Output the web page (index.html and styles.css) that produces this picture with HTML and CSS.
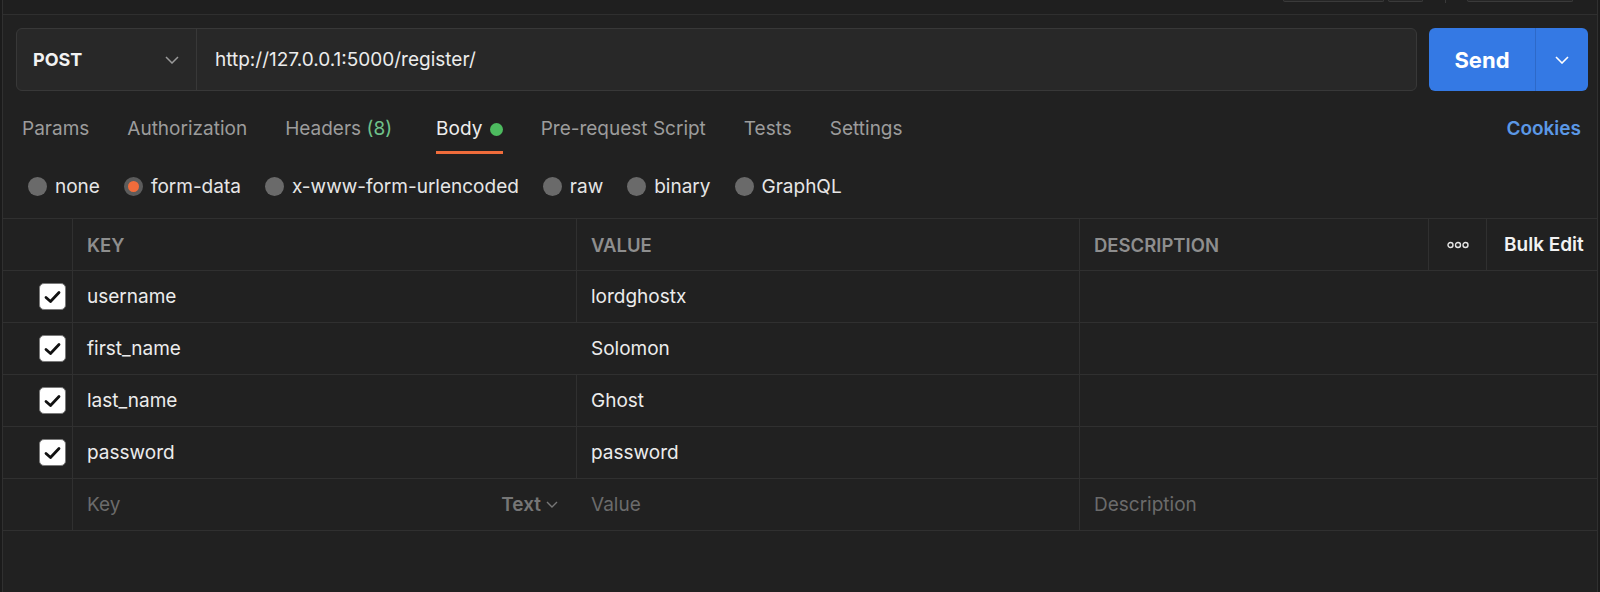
FILE: index.html
```html
<!DOCTYPE html>
<html>
<head>
<meta charset="utf-8">
<link rel="stylesheet" href="styles.css">
</head>
<body>
<div class="window">
  <div class="topbar">
    <span class="stub stub-a"></span>
    <span class="stub stub-b"></span>
    <span class="stub-div"></span>
    <span class="stub stub-c"></span>
  </div>

  <div class="urlrow">
    <div class="urlbox">
      <div class="method">
        <span class="method-name">POST</span>
        <svg class="chev" width="14" height="8" viewBox="0 0 14 8"><path d="M1 1 L7 7 L13 1" fill="none" stroke="#9a9a9a" stroke-width="1.5"/></svg>
      </div>
      <div class="url">http://127.0.0.1:5000/register/</div>
    </div>
    <div class="send">
      <span class="send-label">Send</span>
      <span class="send-chev"><svg width="14" height="8" viewBox="0 0 14 8"><path d="M1 1 L7 7 L13 1" fill="none" stroke="#ffffff" stroke-width="1.6"/></svg></span>
    </div>
  </div>

  <div class="tabs">
    <span class="tab">Params</span>
    <span class="tab">Authorization</span>
    <span class="tab">Headers <span class="count">(8)</span></span>
    <span class="tab active">Body <span class="dot"></span></span>
    <span class="tab">Pre-request Script</span>
    <span class="tab">Tests</span>
    <span class="tab">Settings</span>
    <span class="cookies">Cookies</span>
  </div>

  <div class="radios">
    <span class="radio"><span class="circle"></span>none</span>
    <span class="radio"><span class="circle on"></span>form-data</span>
    <span class="radio"><span class="circle"></span>x-www-form-urlencoded</span>
    <span class="radio"><span class="circle"></span>raw</span>
    <span class="radio"><span class="circle"></span>binary</span>
    <span class="radio"><span class="circle"></span>GraphQL</span>
  </div>

  <div class="table">
    <div class="cell hd"></div>
    <div class="cell hd">KEY</div>
    <div class="cell hd">VALUE</div>
    <div class="cell hd">DESCRIPTION</div>
    <div class="cell hd more"><svg width="22" height="8" viewBox="0 0 22 8"><circle cx="3.5" cy="4" r="2.5" fill="none" stroke="#e6e6e6" stroke-width="1.4"/><circle cx="11" cy="4" r="2.5" fill="none" stroke="#e6e6e6" stroke-width="1.4"/><circle cx="18.5" cy="4" r="2.5" fill="none" stroke="#e6e6e6" stroke-width="1.4"/></svg></div>
    <div class="cell hd bulk">Bulk Edit</div>

    <div class="cell chk"><span class="box"><svg width="17" height="14" viewBox="0 0 17 14"><path d="M2 7.5 L6.5 11.5 L15 2.5" fill="none" stroke="#111" stroke-width="2.8" stroke-linecap="round" stroke-linejoin="round"/></svg></span></div>
    <div class="cell">username</div>
    <div class="cell">lordghostx</div>
    <div class="cell desc"></div>

    <div class="cell chk"><span class="box"><svg width="17" height="14" viewBox="0 0 17 14"><path d="M2 7.5 L6.5 11.5 L15 2.5" fill="none" stroke="#111" stroke-width="2.8" stroke-linecap="round" stroke-linejoin="round"/></svg></span></div>
    <div class="cell">first_name</div>
    <div class="cell">Solomon</div>
    <div class="cell desc"></div>

    <div class="cell chk"><span class="box"><svg width="17" height="14" viewBox="0 0 17 14"><path d="M2 7.5 L6.5 11.5 L15 2.5" fill="none" stroke="#111" stroke-width="2.8" stroke-linecap="round" stroke-linejoin="round"/></svg></span></div>
    <div class="cell">last_name</div>
    <div class="cell">Ghost</div>
    <div class="cell desc"></div>

    <div class="cell chk"><span class="box"><svg width="17" height="14" viewBox="0 0 17 14"><path d="M2 7.5 L6.5 11.5 L15 2.5" fill="none" stroke="#111" stroke-width="2.8" stroke-linecap="round" stroke-linejoin="round"/></svg></span></div>
    <div class="cell">password</div>
    <div class="cell">password</div>
    <div class="cell desc"></div>

    <div class="cell"></div>
    <div class="cell ph keycell"><span>Key</span><span class="type">Text <svg width="12" height="7" viewBox="0 0 12 7"><path d="M1 1 L6 6 L11 1" fill="none" stroke="#777" stroke-width="1.4"/></svg></span></div>
    <div class="cell ph">Value</div>
    <div class="cell ph desc">Description</div>
  </div>
</div>
</body>
</html>
```
FILE: styles.css
```css
html, body {
  margin: 0;
  padding: 0;
  background: #1b1b1b;
  height: 100%;
}
body {
  font-family: Inter, "Noto Sans", sans-serif;
  color: #e6e6e6;
  overflow: hidden;
}
.window {
  margin: 0 2px;
  height: 592px;
  background: #212121;
  border-left: 1px solid #303030;
  border-right: 1px solid #303030;
}
.topbar {
  height: 14px;
  background: #1f1f1f;
  border-bottom: 1px solid #2f2f2f;
  display: flex;
  justify-content: flex-end;
  align-items: flex-start;
  padding-right: 24px;
}
.stub {
  height: 1px;
  border: 1px solid #3a3a3a;
  border-top: none;
  border-radius: 0 0 4px 4px;
  background: #262626;
}
.stub-a { width: 99px; }
.stub-b { width: 33px; margin-left: 4px; }
.stub-div { width: 1px; height: 3px; background: #3a3a3a; margin: 0 21px 0 22px; }
.stub-c { width: 104px; }

.urlrow {
  display: flex;
  margin: 13px 9px 0 13px;
  height: 63px;
  gap: 12px;
}
.urlbox {
  flex: 1;
  display: flex;
  background: #282828;
  border: 1px solid #383838;
  border-radius: 6px;
}
.method {
  box-sizing: border-box;
  width: 180px;
  display: flex;
  align-items: center;
  justify-content: space-between;
  padding: 0 17px 0 16px;
  border-right: 1px solid #383838;
}
.method-name {
  font-weight: 700;
  font-size: 18px;
  color: #f2f2f2;
}
.url {
  display: flex;
  align-items: center;
  padding-left: 18px;
  font-size: 19px;
  color: #ececec;
}
.send {
  width: 159px;
  display: flex;
  background: #3479e4;
  border-radius: 6px;
  color: #fff;
}
.send-label {
  width: 106px;
  display: flex;
  align-items: center;
  justify-content: center;
  font-weight: 700;
  font-size: 22px;
  border-right: 1px solid #2d69c8;
}
.send-chev {
  flex: 1;
  display: flex;
  align-items: center;
  justify-content: center;
}

.tabs {
  display: flex;
  align-items: flex-start;
  margin-top: 16px;
  padding: 0 16px 0 19px;
  gap: 38px;
  height: 47px;
}
.tab {
  line-height: 44px;
  font-size: 19px;
  color: #9c9c9c;
  border-bottom: 3px solid transparent;
  display: flex;
  align-items: center;
  white-space: pre;
}
.tab .count { color: #6fc18a; }
.tab.active {
  color: #ededed;
  border-bottom-color: #f06c3b;
  margin-left: 6px;
}
.dot {
  display: inline-block;
  width: 13px;
  height: 13px;
  border-radius: 50%;
  background: #4dbb5f;
  margin-left: 2px;
}
.cookies {
  margin-left: auto;
  line-height: 44px;
  font-size: 19px;
  font-weight: 600;
  color: #5b98e6;
}

.radios {
  display: flex;
  align-items: center;
  height: 64px;
  padding-left: 25px;
  gap: 24px;
  font-size: 19px;
  color: #e6e6e6;
}
.radio {
  display: flex;
  align-items: center;
  gap: 8px;
}
.circle {
  width: 19px;
  height: 19px;
  border-radius: 50%;
  background: #6a6a6a;
  box-sizing: border-box;
}
.circle.on {
  background: #f06c3b;
  border: 4px solid #5c5c5c;
}

.table {
  display: grid;
  grid-template-columns: 70px 504px 503px 349px 58px 1fr;
  grid-auto-rows: 52px;
  border-top: 1px solid #303030;
}
.cell {
  border-right: 1px solid #303030;
  border-bottom: 1px solid #303030;
  display: flex;
  align-items: center;
  padding-left: 14px;
  font-size: 19px;
  color: #ececec;
  white-space: nowrap;
}
.cell:nth-child(6n) { border-right: none; }
.hd {
  font-weight: 600;
  font-size: 18.5px;
  color: #8e8e8e;
}
.hd:first-child { padding: 0; }
.more { justify-content: center; padding: 0; }
.bulk {
  color: #f2f2f2;
  font-size: 19px;
  padding-left: 17px;
  border-right: none;
}
.desc {
  grid-column: span 3;
  border-right: none;
}
.chk {
  justify-content: flex-end;
  padding: 0 6px 0 0;
}
.box {
  width: 25px;
  height: 25px;
  background: #fff;
  border: 1px solid #7a7a7a;
  border-radius: 5px;
  display: flex;
  align-items: center;
  justify-content: center;
}
.ph { color: #6b6b6b; }
.keycell {
  justify-content: space-between;
  padding-right: 19px;
}
.type {
  font-weight: 600;
  color: #767676;
  display: flex;
  align-items: center;
  gap: 5px;
}
.cell:nth-last-child(4) { padding: 0; }
```
